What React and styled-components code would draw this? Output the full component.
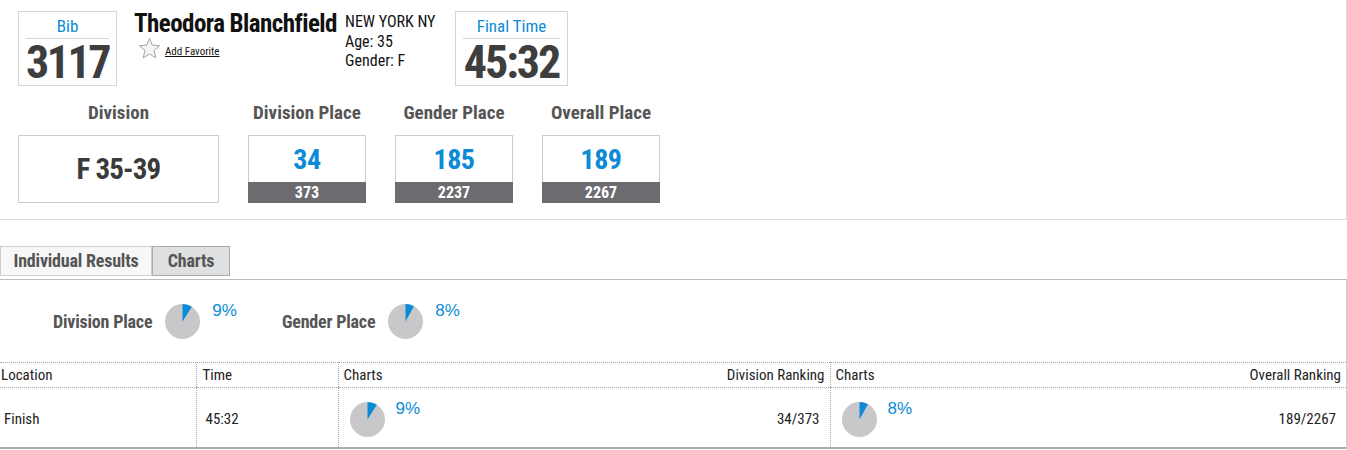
import React from 'react';
import styled, { createGlobalStyle } from 'styled-components';

const FONT = `"Liberation Sans Narrow", "Roboto Condensed", "DejaVu Sans Condensed", "Arial Narrow", "Liberation Sans", sans-serif`;
const BLUE = '#0b8bd6';

const Global = createGlobalStyle`
  html, body { margin: 0; padding: 0; background: #fff; }
  body { font-family: ${FONT}; font-stretch: condensed; color: #222; }
  * { box-sizing: border-box; }
`;

const Page = styled.div`
  width: 1347px;
`;

const Summary = styled.section`
  padding: 11px 0 16px 18px;
  border-right: 1px solid #ddd;
  border-bottom: 1px solid #ddd;
`;

const TopRow = styled.div`
  display: flex;
  align-items: flex-start;
  height: 75px;
`;

const ValueBox = styled.div`
  width: ${p => p.$w}px;
  height: 75px;
  border: 1px solid #d6d6d6;
  display: flex;
  flex-direction: column;
  align-items: center;
  padding: 4px 7px 0;
`;

const BoxLabel = styled.div`
  width: 100%;
  text-align: center;
  color: ${BLUE};
  font-size: 17px;
  line-height: 21px;
  padding-bottom: 1px;
  border-bottom: 1px solid #d6d6d6;
`;

const BoxValue = styled.div`
  margin-top: 4px;
  font-size: 46px;
  font-weight: bold;
  color: #3e3e3e;
  line-height: 38px;
  letter-spacing: ${p => p.$ls}px;
`;

const NameBlock = styled.div`
  width: 201px;
  margin-left: 17px;
`;

const Name = styled.div`
  font-size: 25px;
  font-weight: bold;
  color: #111;
  line-height: 25px;
  letter-spacing: -0.55px;
  white-space: nowrap;
`;

const FavRow = styled.div`
  display: flex;
  align-items: center;
  margin-top: 1px;
  margin-left: 4px;
`;

const FavLink = styled.a`
  font-size: 11px;
  color: #111;
  text-decoration: underline;
  margin-left: 4px;
  margin-top: 5px;
`;

const Info = styled.div`
  width: 110px;
  margin-left: 10px;
  font-size: 16px;
  line-height: 19.5px;
  color: #111;
  padding-top: 1px;
`;

const StatsRow = styled.div`
  display: flex;
  gap: 29px;
  margin-top: 16px;
`;

const StatCol = styled.div`
  width: ${p => p.$w}px;
  display: flex;
  flex-direction: column;
`;

const StatLabel = styled.div`
  height: 22px;
  line-height: 22px;
  margin-bottom: 11px;
  text-align: center;
  font-size: 19px;
  font-weight: bold;
  color: #555;
  white-space: nowrap;
`;

const DivisionBox = styled.div`
  height: 68px;
  border: 1px solid #ccc;
  display: flex;
  align-items: center;
  justify-content: center;
  font-size: 29px;
  font-weight: bold;
  letter-spacing: -0.8px;
  color: #3a3a3a;
`;

const PlaceBox = styled.div`
  height: 68px;
  border: 1px solid #ccc;
  display: flex;
  flex-direction: column;
`;

const PlaceValue = styled.div`
  flex: 1;
  display: flex;
  align-items: center;
  justify-content: center;
  font-size: 28px;
  font-weight: bold;
  letter-spacing: -0.5px;
  color: ${BLUE};
`;

const PlaceTotal = styled.div`
  height: 21px;
  margin: 0 -1px -1px;
  background: #6c6b70;
  color: #fff;
  font-size: 16px;
  font-weight: bold;
  line-height: 21px;
  text-align: center;
`;

const Tabs = styled.div`
  display: flex;
  margin-top: 26px;
  height: 30px;
`;

const Tab = styled.div`
  height: 30px;
  width: ${p => p.$w}px;
  border: 1px solid ${p => (p.$active ? '#aaa' : '#cfcfcf')};
  background: ${p => (p.$active ? '#dfe0e2' : '#f7f7f7')};
  font-size: 18px;
  font-weight: bold;
  color: #555;
  line-height: 28px;
  text-align: center;
  letter-spacing: -0.2px;
`;

const Panel = styled.section`
  margin-top: 3px;
  border-top: 1px solid #bbb;
  border-right: 1px solid #ccc;
`;

const ChartsRow = styled.div`
  height: 82px;
  display: flex;
  align-items: center;
  padding-left: 53px;
  gap: 45px;
`;

const ChartItem = styled.div`
  display: flex;
  align-items: center;
  gap: 13px;
`;

const ChartLabel = styled.div`
  font-size: 18px;
  font-weight: bold;
  color: #555;
  letter-spacing: -0.2px;
`;

const PieGroup = styled.div`
  display: flex;
  align-items: flex-start;
  gap: ${p => p.$gap || 12}px;
`;

const Pct = styled.div`
  color: ${BLUE};
  font-size: 17px;
  line-height: 14px;
  font-family: "Liberation Sans", Arial, sans-serif;
  font-stretch: normal;
`;

const Table = styled.table`
  width: 1346px;
  border-collapse: collapse;
  table-layout: fixed;
  border-top: 1px dotted #aaa;
  border-bottom: 2px solid #aaa;
`;

const Th = styled.th`
  height: 25px;
  font-size: 15px;
  font-weight: normal;
  color: #222;
  text-align: left;
  padding: 0 ${p => p.$pr || 0}px 0 ${p => p.$pl || 0}px;
  border-bottom: 1px dotted #aaa;
  border-left: ${p => (p.$first ? 'none' : '1px dotted #aaa')};
  vertical-align: middle;
`;

const Td = styled.td`
  height: 60px;
  font-size: 15px;
  color: #222;
  padding: 4px ${p => p.$pr || 0}px 0 ${p => p.$pl || 0}px;
  border-left: ${p => (p.$first ? 'none' : '1px dotted #aaa')};
  vertical-align: middle;
`;

const ChartCell = styled.div`
  display: flex;
  align-items: center;
  justify-content: space-between;
`;

const Star = () => (
  <svg width="23" height="23" viewBox="0 0 24 24">
    <polygon
      points="12,1.2 14.9,8.5 22.6,9.1 16.7,14.1 18.6,21.8 12,17.7 5.4,21.8 7.3,14.1 1.4,9.1 9.1,8.5"
      fill="#f5f5f5"
      stroke="#a0a0a0"
      strokeWidth="1"
      strokeLinejoin="round"
    />
  </svg>
);

const Pie = ({ pct, size = 35 }) => {
  const r = size / 2;
  const a = (pct / 100) * 2 * Math.PI;
  const x = r + r * Math.sin(a);
  const y = r - r * Math.cos(a);
  return (
    <svg width={size} height={size} viewBox={`0 0 ${size} ${size}`}>
      <circle cx={r} cy={r} r={r} fill="#c8c8ca" />
      <path d={`M${r},${r} L${r},0 A${r},${r} 0 0 1 ${x},${y} Z`} fill={BLUE} />
    </svg>
  );
};

const places = [
  { label: 'Division Place', value: '34', total: '373' },
  { label: 'Gender Place', value: '185', total: '2237' },
  { label: 'Overall Place', value: '189', total: '2267' },
];

export default function App() {
  return (
    <Page>
      <Global />
      <Summary>
        <TopRow>
          <ValueBox $w={99}>
            <BoxLabel>Bib</BoxLabel>
            <BoxValue $ls={-2.5}>3117</BoxValue>
          </ValueBox>
          <NameBlock>
            <Name>Theodora Blanchfield</Name>
            <FavRow>
              <Star />
              <FavLink>Add Favorite</FavLink>
            </FavRow>
          </NameBlock>
          <Info>
            NEW YORK NY<br />
            Age: 35<br />
            Gender: F
          </Info>
          <ValueBox $w={113}>
            <BoxLabel>Final Time</BoxLabel>
            <BoxValue $ls={-2}>45:32</BoxValue>
          </ValueBox>
        </TopRow>
        <StatsRow>
          <StatCol $w={201}>
            <StatLabel>Division</StatLabel>
            <DivisionBox>F 35-39</DivisionBox>
          </StatCol>
          {places.map(p => (
            <StatCol $w={118} key={p.label}>
              <StatLabel>{p.label}</StatLabel>
              <PlaceBox>
                <PlaceValue>{p.value}</PlaceValue>
                <PlaceTotal>{p.total}</PlaceTotal>
              </PlaceBox>
            </StatCol>
          ))}
        </StatsRow>
      </Summary>

      <Tabs>
        <Tab $w={152}>Individual Results</Tab>
        <Tab $w={78} $active>Charts</Tab>
      </Tabs>

      <Panel>
        <ChartsRow>
          <ChartItem>
            <ChartLabel>Division Place</ChartLabel>
            <PieGroup>
              <Pie pct={9} />
              <Pct>9%</Pct>
            </PieGroup>
          </ChartItem>
          <ChartItem>
            <ChartLabel>Gender Place</ChartLabel>
            <PieGroup>
              <Pie pct={8} />
              <Pct>8%</Pct>
            </PieGroup>
          </ChartItem>
        </ChartsRow>

        <Table>
          <colgroup>
            <col style={{ width: 196 }} />
            <col style={{ width: 142 }} />
            <col style={{ width: 492 }} />
            <col style={{ width: 516 }} />
          </colgroup>
          <thead>
            <tr>
              <Th $first $pl={1}>Location</Th>
              <Th $pl={6}>Time</Th>
              <Th $pl={5} $pr={5}>
                <ChartCell>
                  <span>Charts</span>
                  <span>Division Ranking</span>
                </ChartCell>
              </Th>
              <Th $pl={5} $pr={5}>
                <ChartCell>
                  <span>Charts</span>
                  <span>Overall Ranking</span>
                </ChartCell>
              </Th>
            </tr>
          </thead>
          <tbody>
            <tr>
              <Td $first $pl={4}>Finish</Td>
              <Td $pl={9}>45:32</Td>
              <Td $pl={11} $pr={10}>
                <ChartCell>
                  <PieGroup $gap={11}>
                    <Pie pct={9} />
                    <Pct>9%</Pct>
                  </PieGroup>
                  <span>34/373</span>
                </ChartCell>
              </Td>
              <Td $pl={11} $pr={10}>
                <ChartCell>
                  <PieGroup $gap={11}>
                    <Pie pct={8} />
                    <Pct>8%</Pct>
                  </PieGroup>
                  <span>189/2267</span>
                </ChartCell>
              </Td>
            </tr>
          </tbody>
        </Table>
      </Panel>
    </Page>
  );
}
